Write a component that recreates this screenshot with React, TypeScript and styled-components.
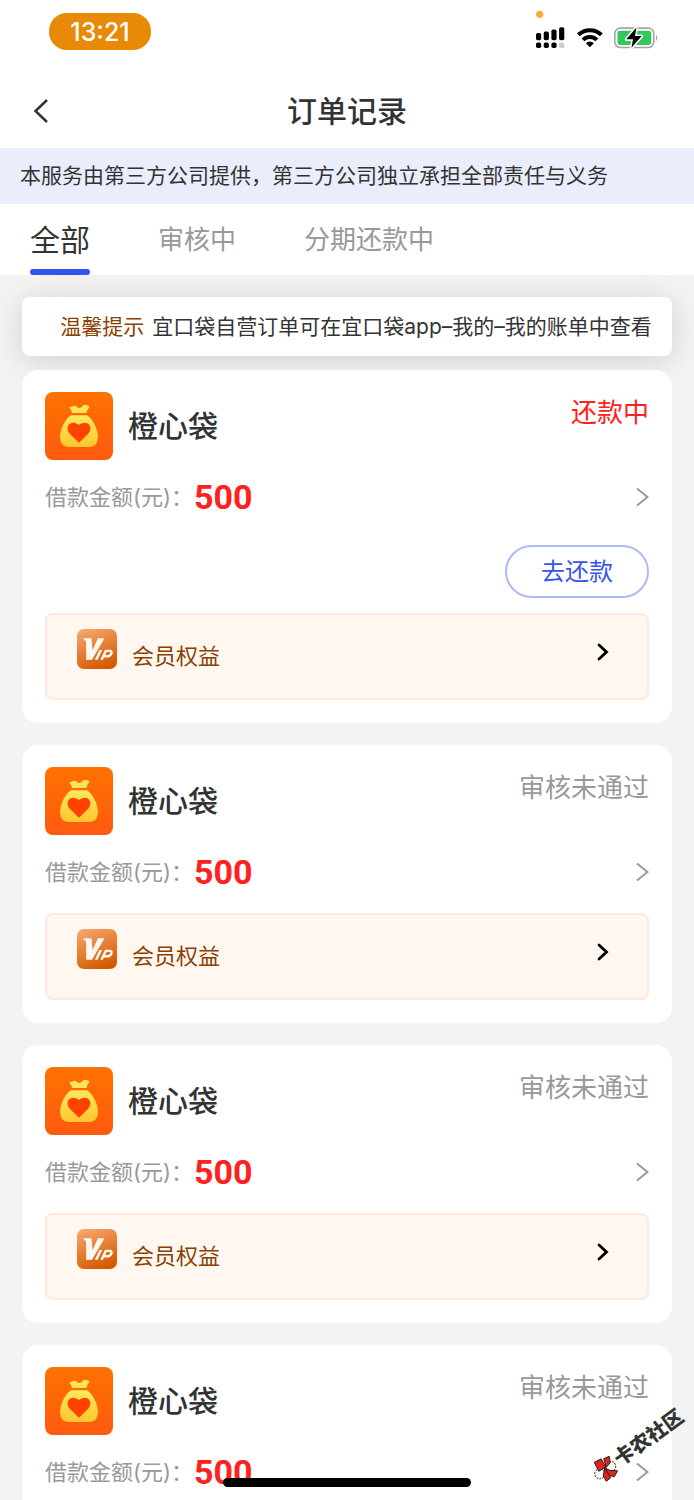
import React from 'react';
import styled, { createGlobalStyle } from 'styled-components';

const GlobalStyle = createGlobalStyle`
  *, *::before, *::after { box-sizing: border-box; }
  body {
    margin: 0;
    background: #f3f3f3;
    color: #333;
    font-family: Inter, "Noto Sans CJK SC", sans-serif;
    font-weight: 400;
  }
  button { font: inherit; color: inherit; background: none; border: 0; padding: 0; cursor: pointer; }
  h1, h2, p { margin: 0; }
`;

const Screen = styled.div`
  position: relative;
  display: flex;
  flex-direction: column;
  height: 100vh;
  overflow: hidden;
`;

const StatusBar = styled.div`
  display: flex;
  justify-content: space-between;
  align-items: flex-start;
  height: 74px;
  padding: 0 36px 0 49px;
  background: #fff;
`;

const Clock = styled.time`
  width: 102px;
  height: 37px;
  margin-top: 13px;
  border-radius: 18px;
  background: #e98a06;
  color: #fff;
  font-size: 25px;
  font-weight: 500;
  line-height: 38px;
  text-align: center;
`;

const Header = styled.header`
  display: grid;
  grid-template-columns: 72px 1fr 72px;
  align-items: center;
  height: 74px;
  background: #fff;
`;

const BackButton = styled.button`
  display: flex;
  align-items: center;
  height: 100%;
  padding-left: 32px;
`;

const Title = styled.h1`
  font-size: 30px;
  line-height: 44px;
  font-weight: 500;
  text-align: center;
`;

const Notice = styled.p`
  padding: 13px 20px;
  background: #e9edfc;
  font-size: 21px;
  line-height: 30px;
  white-space: nowrap;
`;

const Tabs = styled.nav`
  display: flex;
  align-items: stretch;
  gap: 68px;
  height: 71px;
  padding: 0 30px;
  background: #fff;
`;

const Tab = styled.button<{ $active?: boolean }>`
  position: relative;
  font-size: ${p => (p.$active ? 30 : 26)}px;
  line-height: 70px;
  color: ${p => (p.$active ? '#333' : '#999')};
  &::after {
    content: '';
    display: ${p => (p.$active ? 'block' : 'none')};
    position: absolute;
    left: 0;
    right: 0;
    bottom: 0;
    height: 6px;
    border-radius: 3px;
    background: #3654eb;
  }
`;

const Feed = styled.main`
  flex: 1;
  min-height: 0;
  overflow-y: auto;
  scrollbar-width: none;
  padding: 22px;
`;

const Tip = styled.p`
  display: flex;
  justify-content: center;
  gap: 8px;
  margin-bottom: 14px;
  padding: 15px 0 14px 18px;
  border-radius: 8px;
  background: #fff;
  box-shadow: 0 4px 32px rgba(0, 0, 0, 0.14);
  font-size: 21px;
  line-height: 30px;
  white-space: nowrap;
`;

const TipLabel = styled.span`
  color: #8a4100;
`;

const OrderList = styled.div`
  position: relative;
  display: flex;
  flex-direction: column;
  gap: 22px;
`;

const Card = styled.article`
  padding: 22px 23px 23px;
  border-radius: 16px;
  background: #fff;
`;

const CardHead = styled.div`
  display: flex;
  align-items: center;
  gap: 15px;
`;

const Name = styled.h2`
  flex: 1;
  font-size: 30px;
  line-height: 44px;
  font-weight: 500;
`;

const Status = styled.span<{ $due?: boolean }>`
  align-self: flex-start;
  font-size: 26px;
  line-height: 42px;
  color: ${p => (p.$due ? '#ff2020' : '#999')};
`;

const AmountRow = styled.button`
  display: flex;
  align-items: center;
  gap: 1px;
  width: 100%;
  height: 40px;
  margin-top: 17px;
  text-align: left;
  svg { margin-left: auto; }
`;

const AmountLabel = styled.span`
  font-size: 22px;
  line-height: 32px;
  color: #999;
`;

const Amount = styled.strong`
  font-family: Roboto, sans-serif;
  font-size: 34px;
  line-height: 40px;
  font-weight: 700;
  color: #ff2020;
`;

const Actions = styled.div`
  display: flex;
  justify-content: flex-end;
  margin-top: 28px;
`;

const RepayButton = styled.button`
  width: 144px;
  height: 53px;
  border: 2px solid #adb9f8;
  border-radius: 27px;
  color: #3654eb;
  font-size: 24px;
  line-height: 48px;
`;

const Benefits = styled.button<{ $afterAction?: boolean }>`
  display: flex;
  align-items: flex-start;
  width: 100%;
  height: 87px;
  margin-top: ${p => (p.$afterAction ? 15 : 21)}px;
  padding: 14px 38px 0 30px;
  border: 2px solid #ffe8dc;
  border-radius: 8px;
  background: #fff7f0;
  > svg:last-child { margin: 14px 0 0 auto; }
`;

const BenefitsLabel = styled.span`
  margin: 12px 0 0 15px;
  font-size: 22px;
  line-height: 30px;
  font-weight: 400;
  color: #8a4100;
`;

const HomeIndicator = styled.div`
  position: absolute;
  left: 50%;
  bottom: 13px;
  width: 248px;
  height: 9px;
  margin-left: -124px;
  border-radius: 5px;
  background: #000;
`;

const Watermark = styled.div`
  position: absolute;
  right: 3px;
  bottom: 41px;
  display: flex;
  align-items: center;
  gap: 1px;
  transform: rotate(-36deg);
  font-size: 20px;
  line-height: 28px;
  font-weight: 900;
  pointer-events: none;
  svg { transform: rotate(36deg); }
`;

const StatusIcons = () => (
  <svg width="124" height="52" viewBox="0 0 124 52" aria-hidden="true">
    <circle cx="5.700" cy="14.300" r="3.600" fill="#ffab35" />
    <rect x="2" y="33" width="5.200" height="7.200" rx="1.800" />
    <rect x="9.700" y="31.600" width="5.200" height="8.600" rx="1.800" />
    <rect x="17.400" y="29.500" width="5.200" height="10.700" rx="1.800" />
    <rect x="25.100" y="27.200" width="5.200" height="13" rx="1.800" />
    <rect x="2" y="42.600" width="5.200" height="5.400" rx="1.800" />
    <rect x="9.700" y="42.600" width="5.200" height="5.400" rx="1.800" />
    <rect x="17.400" y="42.600" width="5.200" height="5.400" rx="1.800" />
    <rect x="25.100" y="42.600" width="5.200" height="5.400" rx="1.800" fill="#ccc" />
    <g fill="none" stroke="#000" strokeWidth="4">
      <path d="M44.400 34.800 A16.500 16.500 0 0 1 67.400 34.800" />
      <path d="M49 39.800 A9.800 9.800 0 0 1 62.800 39.800" />
    </g>
    <path d="M51.900 43.200 A5.800 5.800 0 0 1 59.900 43.200 L55.900 47.300Z" />
    <rect x="80.800" y="28.100" width="39" height="19.400" rx="5.500" fill="none" stroke="#a5a5a5" strokeWidth="1.600" />
    <path d="M122 34.500 Q124.400 37.800 122 41.200Z" fill="#a5a5a5" />
    <rect x="83.500" y="30.700" width="33.800" height="14.400" rx="3" fill="#34c759" />
    <path d="M102.500 27.500 L92.300 39.300 H99 L97.500 47.700 L107.700 36 H101Z" fill="#000" stroke="#fff" strokeWidth="3.200" strokeLinejoin="round" paintOrder="stroke" />
  </svg>
);

const ArrowRight = () => (
  <svg width="14" height="20" viewBox="0 0 14 20" fill="none" stroke="#999" strokeWidth="2" aria-hidden="true">
    <path d="M2 1.500 L12.500 10 L2 18.500" />
  </svg>
);

const BoldArrowRight = () => (
  <svg width="14" height="18" viewBox="0 0 14 18" fill="none" stroke="#000" strokeWidth="2.800" strokeLinecap="round" aria-hidden="true">
    <path d="M4 2 L11.500 9 L4 16" />
  </svg>
);

const BagLogo = () => (
  <svg width="68" height="68" viewBox="0 0 68 68" aria-hidden="true">
    <defs>
      <linearGradient id="bagBg" x1="0" y1="0" x2="0" y2="1">
        <stop offset="0" stopColor="#ff7200" />
        <stop offset="1" stopColor="#ff5a10" />
      </linearGradient>
      <linearGradient id="bagFill" x1="0" y1="0" x2="0" y2="1">
        <stop offset="0" stopColor="#ffe95c" />
        <stop offset="1" stopColor="#ffc62e" />
      </linearGradient>
    </defs>
    <rect width="68" height="68" rx="8" fill="url(#bagBg)" />
    <path d="M24 15.500 Q26 14.500 28.500 14 Q30.500 13 32 15 Q34 17 36.500 15 Q39 12 41.500 13 Q44.500 13.500 44.200 15.500 Q41.500 18 41.500 21 H27 Q26.500 17.500 24 15.500Z" fill="#ffe45a" />
    <path d="M26 23.200 H42 C49 28 53 38 53 45.500 Q52.500 55 43.500 55 H24.500 Q15.500 55 15 45.500 C15 38 19 28 26 23.200Z" fill="url(#bagFill)" />
    <path d="M34 50.700 L25 42 C18.500 35 26 26.500 34 33 C42 26.500 49.500 35 43 42Z" fill="#ff4200" />
  </svg>
);

const VipIcon = () => (
  <svg width="40" height="40" viewBox="0 0 40 40" aria-hidden="true">
    <defs>
      <linearGradient id="vipBg" x1="0.2" y1="0" x2="0.6" y2="1">
        <stop offset="0" stopColor="#f5a56c" />
        <stop offset="1" stopColor="#d45a00" />
      </linearGradient>
    </defs>
    <rect width="40" height="40" rx="7" fill="url(#vipBg)" />
    <path d="M6.500 9.200 H14.500 L15.500 21 L21 9.200 H27.500 L15 30.800 H9.200 L9 11.500 H7Z" fill="#fff7f0" />
    <path d="M22.500 21 H25.200 L20.500 30.800 H17.800Z" fill="#fff7f0" />
    <path d="M24.500 30.800 L28.800 21.900 H32.500 Q35.500 22 34.300 24.800 Q33.300 27.200 30.800 27.200 H26.500" fill="none" stroke="#fff7f0" strokeWidth="2.400" />
  </svg>
);

const WatermarkLogo = () => (
  <svg width="24" height="26" viewBox="0 0 24 26" strokeWidth="1" stroke="#222" aria-hidden="true">
    <circle cx="17" cy="10.500" r="5" fill="#fff" strokeDasharray="2 1" />
    <circle cx="6" cy="18" r="5" fill="#fff" strokeDasharray="2 1" />
    <path d="M0.500 6.500 L7.500 3 L12 11.500 L5 15.500Z" fill="#e2231a" />
    <path d="M10 3 L15.500 0.500 L16.500 7 L12.500 11.500Z" fill="#e2231a" />
    <path d="M11 12 L16 14.500 L24 15 L20.500 21 L15.500 19.500Z" fill="#e2231a" />
    <path d="M11 12.500 L15.500 19.500 L17 22 L12.500 25.500 L9.500 20Z" fill="#e2231a" />
  </svg>
);

const orders = [
  { id: 1, status: '还款中', due: true },
  { id: 2, status: '审核未通过', due: false },
  { id: 3, status: '审核未通过', due: false },
  { id: 4, status: '审核未通过', due: false },
];

const OrderCard = ({ status, due }: { status: string; due: boolean }) => (
  <Card>
    <CardHead>
      <BagLogo />
      <Name>橙心袋</Name>
      <Status $due={due}>{status}</Status>
    </CardHead>
    <AmountRow type="button">
      <AmountLabel>借款金额(元)：</AmountLabel>
      <Amount>500</Amount>
      <ArrowRight />
    </AmountRow>
    {due && (
      <Actions>
        <RepayButton type="button">去还款</RepayButton>
      </Actions>
    )}
    <Benefits type="button" $afterAction={due}>
      <VipIcon />
      <BenefitsLabel>会员权益</BenefitsLabel>
      <BoldArrowRight />
    </Benefits>
  </Card>
);

export default function App() {
  return (
    <>
      <GlobalStyle />
      <Screen>
        <StatusBar>
          <Clock>13:21</Clock>
          <StatusIcons />
        </StatusBar>
        <Header>
          <BackButton type="button" aria-label="返回">
            <svg width="18" height="26" viewBox="0 0 18 26" fill="none" stroke="#333" strokeWidth="2.500" aria-hidden="true">
              <path d="M15 2 L3.500 13 L15 24" />
            </svg>
          </BackButton>
          <Title>订单记录</Title>
        </Header>
        <Notice>本服务由第三方公司提供，第三方公司独立承担全部责任与义务</Notice>
        <Tabs>
          <Tab type="button" $active>全部</Tab>
          <Tab type="button">审核中</Tab>
          <Tab type="button">分期还款中</Tab>
        </Tabs>
        <Feed>
          <Tip>
            <TipLabel>温馨提示</TipLabel>
            <span>宜口袋自营订单可在宜口袋app–我的–我的账单中查看</span>
          </Tip>
          <OrderList>
            {orders.map(o => <OrderCard key={o.id} status={o.status} due={o.due} />)}
          </OrderList>
        </Feed>
        <Watermark>
          <WatermarkLogo />
          <span>卡农社区</span>
        </Watermark>
        <HomeIndicator />
      </Screen>
    </>
  );
}
